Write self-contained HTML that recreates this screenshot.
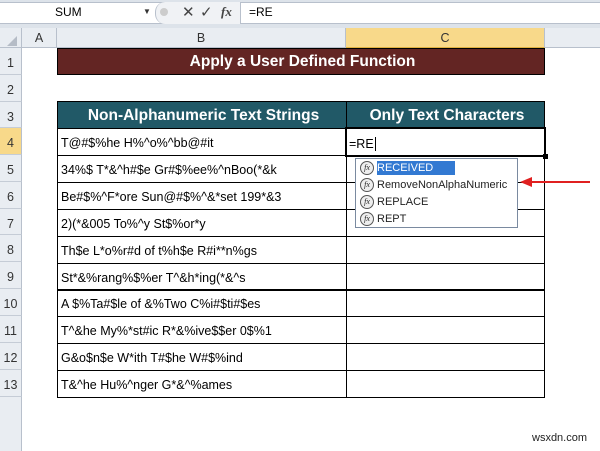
<!DOCTYPE html>
<html><head><style>
body{margin:0;width:600px;height:451px;background:#fff;position:relative;overflow:hidden;font-family:"Liberation Sans",sans-serif;}
.a{position:absolute;box-sizing:border-box;}
.rh{position:absolute;left:0;width:22px;background:#e9edf2;border-bottom:1px solid #c5ccd6;border-right:1px solid #b8c0cc;font-size:12.5px;color:#333;text-align:center;box-sizing:border-box;}
.cell{position:absolute;box-sizing:border-box;border:1px solid #000;font-size:12.5px;padding-left:3px;white-space:nowrap;overflow:hidden;}
.fx{display:inline-block;width:12px;height:12px;border:1px solid #555;border-radius:50%;font:italic 8px "Liberation Serif",serif;text-align:center;line-height:12px;margin:0 3px 0 3px;vertical-align:middle;background:#eee;}
.it{height:17px;line-height:17px;font-size:11px;color:#222;}
.hd{color:#fff;font-weight:bold;font-size:15.5px;text-align:center;}
</style></head><body>
<div class="a" style="left:0;top:0;width:600px;height:28px;background:#dde3ea;"></div>
<div class="a" style="left:0;top:2px;width:600px;height:22px;background:#fff;border-top:1px solid #b8c0cc;border-bottom:1px solid #b8c0cc;"></div>
<div class="a" style="left:55px;top:5px;font-size:12px;">SUM</div>
<div class="a" style="left:143px;top:7px;font-size:8px;color:#333;">▼</div>
<div class="a" style="left:155px;top:2px;width:86px;height:22px;background:#f0f2f5;border-left:1px solid #b8c0cc;border-right:1px solid #b8c0cc;border-radius:10px 0 0 10px;"></div>
<div class="a" style="left:160px;top:8px;width:8px;height:8px;border-radius:50%;background:#ccc;"></div>
<div class="a" style="left:182px;top:3px;font-size:15px;color:#444;">✕</div>
<div class="a" style="left:200px;top:3px;font-size:15px;color:#444;">✓</div>
<div class="a" style="left:221px;top:4px;font:italic bold 13px 'Liberation Serif',serif;color:#444;">fx</div>
<div class="a" style="left:249px;top:5px;font-size:12px;">=RE</div>
<!-- column headers -->
<div class="a" style="left:0;top:28px;width:600px;height:20px;background:#e9edf2;border-bottom:1px solid #b8c0cc;"></div>
<div class="a" style="left:0;top:28px;width:22px;height:20px;border-right:1px solid #b8c0cc;"></div>
<div class="a" style="left:7px;top:36px;width:0;height:0;border-left:10px solid transparent;border-bottom:10px solid #b5bcc6;"></div>
<div class="a" style="left:22px;top:28px;width:35px;height:20px;border-right:1px solid #b8c0cc;font-size:12.5px;text-align:center;line-height:20px;color:#333;">A</div>
<div class="a" style="left:57px;top:28px;width:289px;height:20px;border-right:1px solid #b8c0cc;font-size:12.5px;text-align:center;line-height:20px;color:#333;">B</div>
<div class="a" style="left:346px;top:28px;width:199px;height:20px;background:#f8d98a;border-right:1px solid #b8c0cc;border-bottom:1px solid #e0b040;font-size:12.5px;text-align:center;line-height:20px;color:#333;">C</div>
<!-- row headers -->
<div class="rh" style="top:48px;height:27px;line-height:30px;">1</div>
<div class="rh" style="top:75px;height:27px;line-height:30px;">2</div>
<div class="rh" style="top:102px;height:26px;line-height:30px;">3</div>
<div class="rh" style="top:128px;height:27px;line-height:30px;background:#f8d98a;">4</div>
<div class="rh" style="top:155px;height:27px;line-height:30px;">5</div>
<div class="rh" style="top:182px;height:27px;line-height:30px;">6</div>
<div class="rh" style="top:209px;height:26px;line-height:30px;">7</div>
<div class="rh" style="top:235px;height:27px;line-height:30px;">8</div>
<div class="rh" style="top:262px;height:27px;line-height:30px;">9</div>
<div class="rh" style="top:289px;height:27px;line-height:30px;">10</div>
<div class="rh" style="top:316px;height:27px;line-height:30px;">11</div>
<div class="rh" style="top:343px;height:27px;line-height:30px;">12</div>
<div class="rh" style="top:370px;height:27px;line-height:30px;">13</div>
<div class="rh" style="top:397px;height:54px;border-bottom:none;"></div>
<!-- title -->
<div class="cell hd" style="left:57px;top:48px;width:488px;height:27px;background:#632523;line-height:25px;">Apply a User Defined Function</div>
<div class="cell hd" style="left:57px;top:101px;width:290px;height:28px;background:#215967;line-height:28px;">Non-Alphanumeric Text Strings</div>
<div class="cell hd" style="left:346px;top:101px;width:199px;height:28px;background:#215967;line-height:28px;">Only Text Characters</div>
<div id="rows"></div>
<script>
var t=["T@#$%he H%^o%^bb@#it","34%$ T*&^h#$e Gr#$%ee%^nBoo(*&k","Be#$%^F*ore Sun@#$%^&*set 199*&3","2)(*&005 To%^y St$%or*y","Th$e L*o%r#d of t%h$e R#i**n%gs","St*&%rang%$%er T^&h*ing(*&^s","A $%Ta#$le of &%Two C%i#$ti#$es","T^&he My%*st#ic R*&%ive$$er 0$%1","G&o$n$e W*ith T#$he W#$%ind","T&^he Hu%^nger G*&^%ames"];
var h="";for(var i=0;i<10;i++){var y=Math.round(128+i*26.9);h+='<div class="cell" style="left:57px;top:'+y+'px;width:290px;height:28px;line-height:28px;">'+t[i].replace(/&/g,"&amp;")+'</div><div class="cell" style="left:346px;top:'+y+'px;width:199px;height:28px;"></div>';}
document.getElementById("rows").innerHTML=h;
</script>
<div class="a" style="left:345px;top:127px;width:201px;height:30px;border:2px solid #000;background:#fff;font-size:12.5px;padding:8px 0 0 2px;">=RE<span style="border-left:1px solid #000;margin-left:1px;"></span></div>
<div class="a" style="left:543px;top:154px;width:5px;height:5px;background:#000;"></div>
<div class="a" style="left:355px;top:158px;width:163px;height:70px;border:1px solid #7a8aa0;background:#fff;padding:1px;">
<div class="it"><span class="fx">fx</span><span style="background:#3279d2;color:#fff;padding:1px 22px 1px 0;">RECEIVED</span></div>
<div class="it"><span class="fx">fx</span>RemoveNonAlphaNumeric</div>
<div class="it"><span class="fx">fx</span>REPLACE</div>
<div class="it"><span class="fx">fx</span>REPT</div>
</div>
<svg class="a" style="left:520px;top:176px;" width="72" height="12"><line x1="8" y1="6" x2="70" y2="6" stroke="#e02020" stroke-width="2"/><polygon points="0,6 12,1 12,11" fill="#e02020"/></svg>
<div class="a" style="left:532px;top:432px;font-size:11px;color:#222;">wsxdn.com</div>
</body></html>
